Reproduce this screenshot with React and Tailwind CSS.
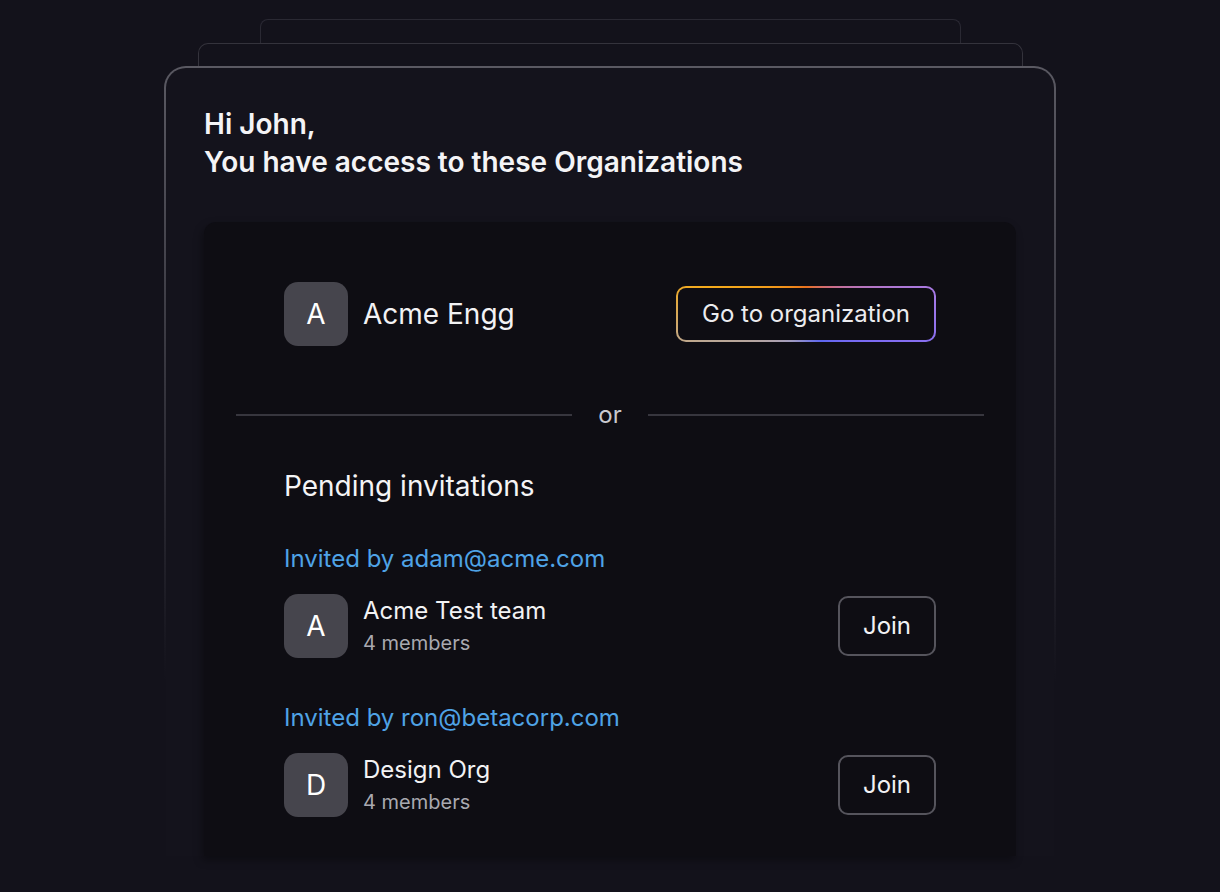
import React from "react";

function Avatar({ letter }) {
  return (
    <div className="w-16 h-16 shrink-0 rounded-[14px] bg-[#46454d] flex items-center justify-center text-[28px] text-white">
      {letter}
    </div>
  );
}

function Invite({ by, name, className }) {
  return (
    <div className={className}>
      <div className="text-[24px] leading-8 text-[#4fa3e6]">Invited by {by}</div>
      <div className="mt-[19px] flex items-center">
        <Avatar letter={name[0]} />
        <div className="ml-[15px] flex flex-col flex-1">
          <div className="text-[24px] leading-8 text-[#f2f2f4]">{name}</div>
          <div className="text-[20px] leading-7 mt-[2px] text-[#a9a9b0]">4 members</div>
        </div>
        <button className="w-[98px] h-[60px] rounded-[10px] border-2 border-[#55545c] text-[24px] text-[#f2f2f4] bg-transparent">
          Join
        </button>
      </div>
    </div>
  );
}

export default function App() {
  return (
    <div
      className="min-h-[892px] h-[892px] overflow-hidden bg-[#13121b] pt-[19px] flex flex-col items-center"
      style={{ fontFamily: "Inter, 'Noto Sans', sans-serif" }}
    >
      {/* back stacked cards */}
      <div className="w-[701px] h-[24px] shrink-0 rounded-t-[8px] border border-b-0 border-[#2a2933] bg-[#13121b]" />
      <div className="w-[825px] h-[23px] shrink-0 rounded-t-[10px] border border-b-0 border-[#34333c] bg-[#13121b]" />
      {/* main card with fading border */}
      <div className="w-[892px] h-[790px] shrink-0 rounded-t-[22px] p-[2px] pb-0 bg-[linear-gradient(to_bottom,#5a5962_0%,#3a3942_35%,#13121b_78%)]">
        <div className="h-full rounded-t-[20px] bg-[#14131c] px-[38px] pt-[37px] flex flex-col">
          <h1 className="text-[28px] leading-[38px] font-semibold text-[#f4f4f6]">
            Hi John,
            <br />
            You have access to these Organizations
          </h1>
          <div className="mt-[41px] flex-1 rounded-t-[12px] bg-[#0e0d13] shadow-[-2px_4px_8px_rgba(0,0,0,0.35)] pt-[60px]">
            <div className="px-20 flex items-center">
              <Avatar letter="A" />
              <div className="ml-[15px] flex-1 text-[28px] text-[#f2f2f4]">Acme Engg</div>
              <div className="rounded-[10px] p-[2px] bg-[conic-gradient(from_0deg,#e8711e_0deg,#d06c7c_40deg,#a77ae6_80deg,#7d6bf2_110deg,#5d66f0_150deg,#a29cc0_210deg,#bba794_255deg,#f4aa1c_285deg,#ef8a1a_330deg,#e8711e_360deg)]">
                <div className="w-[256px] h-[52px] rounded-[8px] bg-[#0e0d13] flex items-center justify-center text-[24px] text-[#ececef]">
                  Go to organization
                </div>
              </div>
            </div>
            <div className="mt-[53px] px-8 flex items-center h-8">
              <div className="flex-1 h-[2px] bg-[#37363e]" />
              <div className="mx-[26px] text-[24px] leading-8 text-[#c9c9cf]">or</div>
              <div className="flex-1 h-[2px] bg-[#37363e]" />
            </div>
            <div className="px-20">
              <div className="mt-[37px] text-[28px] leading-9 text-[#f4f4f6]">Pending invitations</div>
              <Invite className="mt-[39px]" by="adam@acme.com" name="Acme Test team" />
              <Invite className="mt-[44px]" by="ron@betacorp.com" name="Design Org" />
            </div>
          </div>
        </div>
      </div>
    </div>
  );
}
